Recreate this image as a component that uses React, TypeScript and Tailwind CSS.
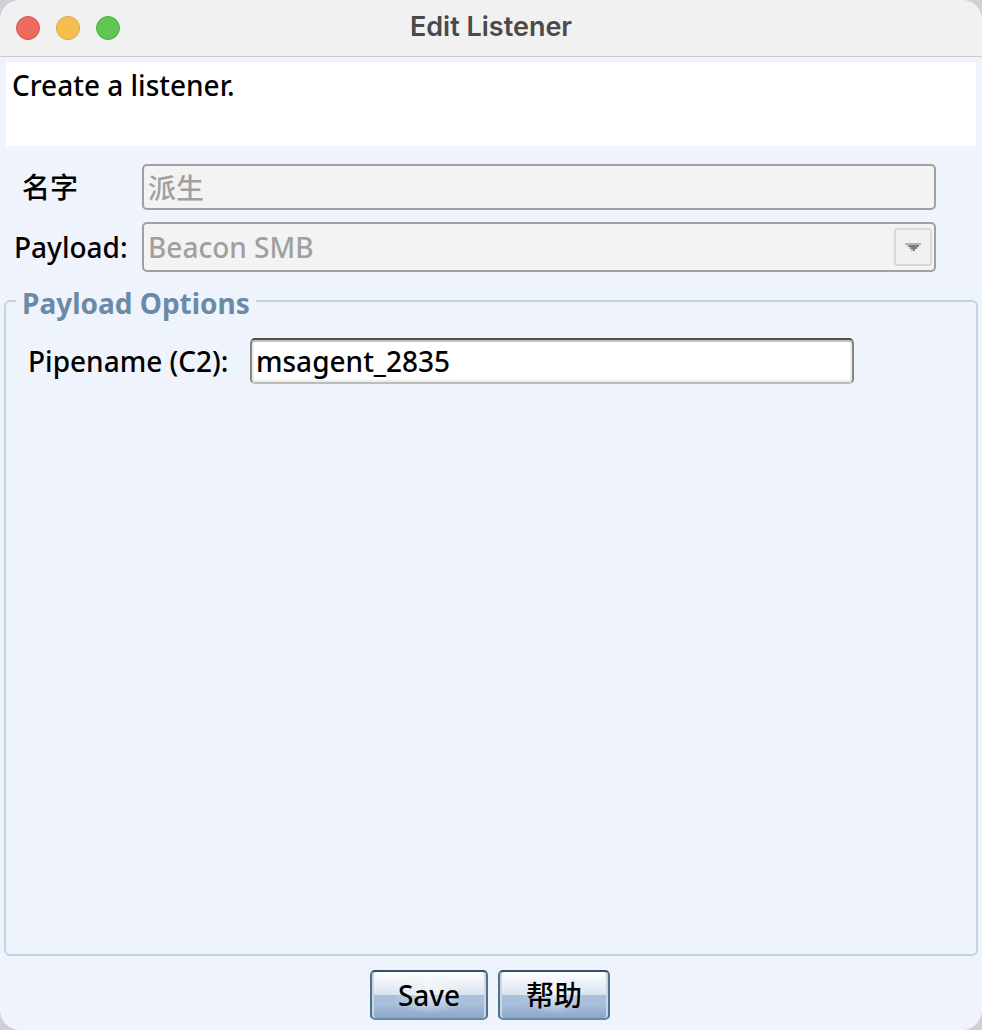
import { useState } from 'react';
import { clsx } from 'clsx';

const trafficLights = [
  { name: 'Close', color: 'bg-[#ed6a5e] border-[#d5554b]' },
  { name: 'Minimize', color: 'bg-[#f5bf4f] border-[#dba445]' },
  { name: 'Zoom', color: 'bg-[#61c554] border-[#4fae43]' },
];

const disabledField =
  'block w-full appearance-none rounded-[5px] border-2 border-[#a0a0a0] bg-[#f3f3f3] px-1 text-[#a0a0a0] opacity-100';

function ActionButton({ label, className }: { label: string; className?: string }) {
  return (
    <button
      type="button"
      className={clsx(
        'h-[50px] rounded-[5px] border-2 border-t-[#31506d] border-x-[#4f7190] border-b-[#6785a5] bg-[linear-gradient(#ffffff_0%,#d9e3ee_50%,#a9bfdb_50%,#a9bfdb_70%,#8ba7c8_100%)] shadow-[inset_2px_0_0_#c9d7e5,inset_-2px_0_0_#c9d7e5]',
        className
      )}
    >
      <span className="bg-[radial-gradient(closest-side,#ffffff99,#ffffff00)] px-1">{label}</span>
    </button>
  );
}

export default function App() {
  const [pipename, setPipename] = useState('msagent_2835');

  return (
    <div className="min-h-screen flex flex-col bg-[#cfd0d6]">
      <div className="flex-1 flex flex-col overflow-hidden rounded-[20px] bg-[#eff3fb] font-['Noto_Sans','Noto_Sans_CJK_SC',sans-serif] text-[28px] leading-9 font-medium text-black">
        {/* Title bar */}
        <header className="relative h-[57px] flex items-center justify-center border-b border-[#cbcbd5] bg-[#f1f1f1]">
          <div className="absolute left-4 flex gap-4">
            {trafficLights.map((light) => (
              <button
                key={light.name}
                type="button"
                aria-label={light.name}
                className={clsx('size-6 rounded-full border', light.color)}
              />
            ))}
          </div>
          <h1 className="pb-0.5 font-['Inter',sans-serif] text-[27px] font-semibold text-[#4a4a4a]">
            Edit Listener
          </h1>
        </header>

        {/* Description */}
        <p className="mx-1.5 mt-[5px] h-[84px] bg-white px-1.5 pt-[5px]">Create a listener.</p>

        {/* Listener fields */}
        <div className="mt-[18px] mr-[46px] ml-3.5 grid grid-cols-[128px_1fr] items-center gap-y-3">
          <label htmlFor="name" className="pl-2">
            名字
          </label>
          <input id="name" disabled value="派生" className={clsx(disabledField, 'h-[46px]')} />

          <label htmlFor="payload">Payload:</label>
          <div className="relative">
            <select id="payload" disabled className={clsx(disabledField, 'h-[50px]')}>
              <option>Beacon SMB</option>
            </select>
            <span className="pointer-events-none absolute top-1.5 right-1 flex size-[38px] items-center justify-center rounded-[3px] border-2 border-[#d9d9d9] bg-[#f1f1f1]">
              <svg width="18" height="8" viewBox="0 0 18 8">
                <path d="M1 0h16v2h-2v2h-2v2h-2v2H7V6H5V4H3V2H1z" fill="#b4b4b4" />
                <path d="M5 2h10v2h-2v2h-2v2H9V6H7V4H5z" fill="#7c7c7c" />
              </svg>
            </span>
          </div>
        </div>

        {/* Payload options */}
        <fieldset className="mx-1 mt-[9px] flex-1 rounded-[6px] border-2 border-[#c4d3e5]">
          <legend className="ml-2.5 px-1.5 pt-1 font-bold text-[#6b8aa8]">Payload Options</legend>
          <div className="mt-[17px] mr-[122px] ml-[22px] grid grid-cols-[222px_1fr] items-center">
            <label htmlFor="pipename" className="whitespace-nowrap">
              Pipename (C2):
            </label>
            <input
              id="pipename"
              value={pipename}
              onChange={(e) => setPipename(e.target.value)}
              className="h-[46px] w-full rounded-[5px] border-2 border-t-[#504e50] border-x-[#858585] border-b-[#bcbcbc] bg-white px-1 shadow-[inset_0_2px_0_#c4c4c4,inset_0_0_0_2px_#ededed] outline-none"
            />
          </div>
        </fieldset>

        <footer className="flex justify-center gap-2.5 pt-3.5 pr-0.5 pb-2.5">
          <ActionButton label="Save" className="w-[118px]" />
          <ActionButton label="帮助" className="w-28" />
        </footer>
      </div>
    </div>
  );
}
